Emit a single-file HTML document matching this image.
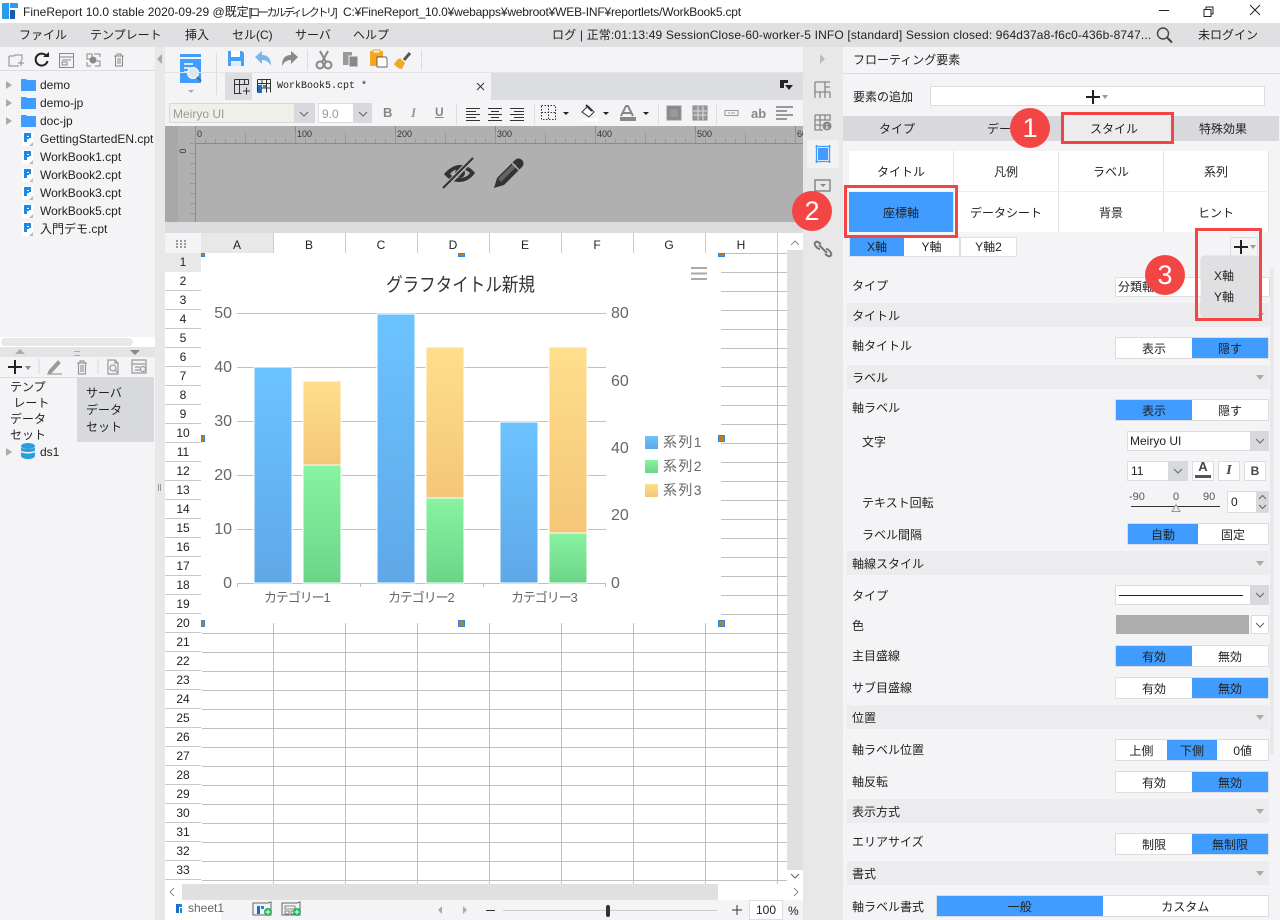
<!DOCTYPE html>
<html lang="ja"><head><meta charset="utf-8"><title>FineReport</title>
<style>
html,body{margin:0;padding:0;width:1280px;height:920px;overflow:hidden;background:#fff}
body{position:relative;font:12px/16px "Liberation Sans","Noto Sans CJK JP",sans-serif;color:#222}
.a{position:absolute;display:block}
.t{position:absolute;white-space:nowrap;line-height:16px}
.l{margin-top:1px}
.c{text-align:center}
.sec{position:absolute;left:847px;width:422px;height:24px;background:#ececee;line-height:26px;text-indent:5px}
.sec:after{content:"";position:absolute;right:5px;top:10px;border:4px solid transparent;border-top:5px solid #aaa;border-bottom:0}
.tg{position:absolute;height:20px;border:1px solid #dcdde0;background:#fff;display:flex;text-align:center;line-height:22px}
.tg span{flex:1;display:block}
.tg .on{background:#409cff}
.red{position:absolute;border:3px solid #f44545;box-sizing:border-box}
.dot{position:absolute;width:40px;height:40px;border-radius:50%;background:#f44545;color:#fff;text-align:center;font-size:27px;line-height:40px}
.h{position:absolute;width:5px;height:5px;border:1px solid #2e86de;background:#c97a10}
.r{height:19px;text-align:center;line-height:18px}
.box{position:absolute;background:#fff;border:1px solid #dcdde0;box-sizing:border-box}
.ar{position:absolute;background:#d8d9dc}
.tree{position:absolute;left:40px;line-height:16px;white-space:nowrap}
svg{overflow:visible}
</style></head><body>
<svg width="0" height="0" style="position:absolute"><defs>
<symbol id="chev" viewBox="0 0 10 6"><path d="M1 1l4 4 4-4" fill="none" stroke="#666" stroke-width="1.1"/></symbol>
<symbol id="doc" viewBox="0 0 12 15"><path d="M0 0h11v10l-4 4H0z" fill="#fff"/><path d="M7 14l4-4v4z" fill="#bbb"/><path d="M2 1h7v5H7V4H5v6H2z" fill="#1e88e5"/><path d="M5 5h2v2H5z" fill="#1e88e5"/></symbol>
<symbol id="fold" viewBox="0 0 15 13"><path d="M0 1h5l1 1h9v11H0z" fill="#409cff"/></symbol>
<symbol id="plus" viewBox="0 0 14 14"><path d="M7 0v14M0 7h14" stroke="#222" stroke-width="2" fill="none"/></symbol>
</defs></svg>

<!-- title bar -->
<svg class="a" style="left:2px;top:3px" width="16" height="16" viewBox="0 0 16 16"><path d="M1 0h6v16H1a1 1 0 0 1-1-1V1a1 1 0 0 1 1-1z" fill="#2a9cf0"/><path d="M8 0h7a1 1 0 0 1 1 1v4H8z" fill="#2a9cf0"/><path d="M8 7h5v9H8z" fill="#1560a8"/></svg>
<div class="t" style="left:23px;top:4px">FineReport 10.0 stable 2020-09-29 @既定<span style="letter-spacing:-2.4px;font-size:11px">[ローカルディレクトリ]</span></div>
<div class="t" style="left:343px;top:4px;letter-spacing:-.19px">C:¥FineReport_10.0¥webapps¥webroot¥WEB-INF¥reportlets/WorkBook5.cpt</div>
<svg class="a" style="left:1155px;top:3px" width="110" height="16" viewBox="0 0 110 16" fill="none" stroke="#222" stroke-width="1"><path d="M4 7.5h10"/><path d="M49 6.5h7v7h-7zM51 6.5V4h7v7h-2"/><path d="M95 2l10 10M105 2L95 12"/></svg>

<!-- menu bar -->
<div class="a" style="left:0;top:23px;width:1280px;height:24px;background:#e0e0e2"></div>
<div class="t" style="left:19px;top:27px">ファイル</div>
<div class="t" style="left:90px;top:27px">テンプレート</div>
<div class="t" style="left:185px;top:27px">挿入</div>
<div class="t" style="left:232px;top:27px">セル(C)</div>
<div class="t" style="left:295px;top:27px">サーバ</div>
<div class="t" style="left:353px;top:27px">ヘルプ</div>
<div class="t" style="left:552px;top:27px;letter-spacing:.16px">ログ | 正常:01:13:49 SessionClose-60-worker-5 INFO [standard] Session closed: 964d37a8-f6c0-436b-8747...</div>
<svg class="a" style="left:1156px;top:27px" width="17" height="17" viewBox="0 0 17 17" fill="none" stroke="#444" stroke-width="1.4"><circle cx="7" cy="6.500" r="5.500"/><path d="M11 10.500l5 5" stroke-width="2"/></svg>
<div class="t" style="left:1198px;top:27px">未ログイン</div>

<!-- left panel -->
<div class="a" style="left:0;top:47px;width:155px;height:873px;background:#f4f4f7"></div>
<div class="a" style="left:0;top:70px;width:155px;height:1px;background:#dcdde0"></div>
<svg class="a" style="left:8px;top:52px" width="120" height="16" viewBox="0 0 120 16" fill="none" stroke="#888" stroke-width="1"><path d="M1 4h5l1-1h7v5M1 4v10h10M10 11h6M13 8v6"/><path d="M51.500 1.500h14v14h-14zM51.500 5h14M54 8h9M54 10h5v3h-5z"/><path d="M79 2h5v5h-5zM86 2h6v3M79 10v4h4M86 9h6v5h-5"/><circle cx="85" cy="8" r="3" fill="#888"/><path d="M106 4h10M109 4V2h4v2M107.500 4v10h7V4M110 6v6M112 6v6"/></svg>
<svg class="a" style="left:34px;top:52px" width="15" height="15" viewBox="0 0 15 15" fill="none"><path d="M12.500 4A6 6 0 1 0 13.500 9" stroke="#222" stroke-width="2"/><path d="M9 5h6V0z" fill="#222"/></svg>

<div class="a" style="left:6px;top:81px;border:4px solid transparent;border-left:6px solid #aaa"></div>
<svg class="a" style="left:21px;top:78px" width="15" height="13"><use href="#fold"/></svg>
<div class="tree" style="top:77px">demo</div>
<div class="a" style="left:6px;top:99px;border:4px solid transparent;border-left:6px solid #aaa"></div>
<svg class="a" style="left:21px;top:96px" width="15" height="13"><use href="#fold"/></svg>
<div class="tree" style="top:95px">demo-jp</div>
<div class="a" style="left:6px;top:117px;border:4px solid transparent;border-left:6px solid #aaa"></div>
<svg class="a" style="left:21px;top:114px" width="15" height="13"><use href="#fold"/></svg>
<div class="tree" style="top:113px">doc-jp</div>
<svg class="a" style="left:22px;top:132px" width="12" height="15"><use href="#doc"/></svg>
<div class="tree" style="top:131px">GettingStartedEN.cpt</div>
<svg class="a" style="left:22px;top:150px" width="12" height="15"><use href="#doc"/></svg>
<div class="tree" style="top:149px">WorkBook1.cpt</div>
<svg class="a" style="left:22px;top:168px" width="12" height="15"><use href="#doc"/></svg>
<div class="tree" style="top:167px">WorkBook2.cpt</div>
<svg class="a" style="left:22px;top:186px" width="12" height="15"><use href="#doc"/></svg>
<div class="tree" style="top:185px">WorkBook3.cpt</div>
<svg class="a" style="left:22px;top:204px" width="12" height="15"><use href="#doc"/></svg>
<div class="tree" style="top:203px">WorkBook5.cpt</div>
<svg class="a" style="left:22px;top:222px" width="12" height="15"><use href="#doc"/></svg>
<div class="tree" style="top:221px">入門デモ.cpt</div>

<div class="a" style="left:0;top:337px;width:155px;height:10px;background:#fff"></div>
<div class="a" style="left:1px;top:338px;width:132px;height:8px;border-radius:4px;background:#e8e8e8"></div>
<div class="a" style="left:0;top:347px;width:155px;height:10px;background:#e4e4e6"></div>
<div class="a" style="left:15px;top:349px;border:5px solid transparent;border-bottom:5px solid #aaa;border-top:0"></div>
<div class="a" style="left:130px;top:350px;border:5px solid transparent;border-top:5px solid #888;border-bottom:0"></div>
<div class="a" style="left:74px;top:351px;width:6px;height:3px;border-top:1px solid #aaa;border-bottom:1px solid #aaa"></div>
<svg class="a" style="left:8px;top:360px" width="14" height="14"><use href="#plus"/></svg>
<div class="a" style="left:25px;top:366px;border:3px solid transparent;border-top:4px solid #888;border-bottom:0"></div>
<svg class="a" style="left:39px;top:358px" width="110" height="18" viewBox="0 0 110 18" fill="none" stroke="#999" stroke-width="1.2"><path d="M0 1v15M59 1v15" stroke="#ddd"/><path d="M10 13L19 3l2 2-9 10-3 1z" fill="#999"/><path d="M9 16h14"/><path d="M38 5h10M41 5V3h4v2M39.500 5v11h7V5M42 7v7M44 7v7"/><path d="M69 2h7l3 3v11H69zM76 2v3h3"/><circle cx="74" cy="10" r="3"/><path d="M76 12l3 3"/><path d="M93 2h14v13H93zM93 6h14M96 9h5M96 12h5"/><circle cx="104" cy="11" r="2.500"/></svg>
<div class="a" style="left:0;top:377px;width:154px;height:1px;background:#dcdde0"></div>
<div class="a" style="left:77px;top:378px;width:77px;height:64px;background:#d8d9dc"></div>
<div class="t" style="left:10px;top:379px;line-height:16px">テンプ<br>&nbsp;レート<br>データ<br>セット</div>
<div class="t" style="left:86px;top:385px;line-height:17px">サーバ<br>データ<br>セット</div>
<div class="a" style="left:6px;top:448px;border:4px solid transparent;border-left:6px solid #aaa"></div>
<svg class="a" style="left:21px;top:443px" width="14" height="16" viewBox="0 0 14 16"><ellipse cx="7" cy="3" rx="7" ry="3" fill="#2a9fe0"/><path d="M0 4.500c2 2 12 2 14 0v3c-2 2-12 2-14 0zM0 9c2 2 12 2 14 0v4c-1 4-13 4-14 0z" fill="#2a9fe0"/></svg>
<div class="tree" style="top:444px">ds1</div>

<!-- splitter -->
<div class="a" style="left:155px;top:47px;width:10px;height:873px;background:#e8e8e8"></div>
<div class="a" style="left:157px;top:54px;border:5px solid transparent;border-right:5px solid #aaa;border-left:0"></div>
<div class="a" style="left:158px;top:484px;width:1px;height:7px;background:#999;box-shadow:2px 0 #999"></div>

<!-- toolbars -->
<div class="a" style="left:165px;top:47px;width:638px;height:79px;background:#f4f4f7"></div>
<svg class="a" style="left:180px;top:54px" width="22" height="42" viewBox="0 0 22 42"><path d="M0 0h21v3H0z" fill="#409cff"/><path d="M0 5h21v24H0z" fill="#409cff"/><path d="M4 10h9M4 14h6M4 18h5" stroke="#fff" stroke-width="1.500"/><circle cx="13" cy="19" r="5.500" fill="#d8e8f8" stroke="#fff"/><path d="M17 23l4 4" stroke="#666" stroke-width="2"/><path d="M8 36h6l-3 3z" fill="#aaa"/></svg>
<div class="a" style="left:216px;top:53px;width:1px;height:42px;background:#ddd"></div>
<svg class="a" style="left:228px;top:50px" width="200" height="22" viewBox="0 0 200 22">
<path d="M0 1h14l2 2v13H0z" fill="#4a9ff0"/><path d="M3 1h9v6H3z" fill="#fff"/><path d="M3 11h10v5H3z" fill="#fff" opacity=".8"/>
<path d="M27 7l7-6v4c7 0 9 5 9 11-2-4-5-6-9-6v4z" fill="#7ab6ec"/>
<path d="M70 7l-7-6v4c-7 0-9 5-9 11 2-4 5-6 9-6v4z" fill="#888"/>
<path d="M79.500 0v20" stroke="#ddd"/>
<circle cx="92" cy="15" r="3.500" fill="none" stroke="#888" stroke-width="2"/><circle cx="100" cy="15" r="3.500" fill="none" stroke="#888" stroke-width="2"/><path d="M94 12L100 1M98 12L92 1" stroke="#888" stroke-width="2"/>
<path d="M115 2h9v13h-9z" fill="#999"/><path d="M121 6h9v11h-9z" fill="#888" stroke="#f4f4f7"/>
<path d="M142 1h13v15h-13z" fill="#f5a623"/><path d="M145 0h7v3h-7z" fill="#f4f4f7" stroke="#f5a623"/><path d="M149 7h9l1 2v8h-10z" fill="#fff" stroke="#333" stroke-width=".7"/>
<path d="M169 10l3-2 5 5-3 6c-3 0-7-3-8-5z" fill="#f5a623"/><path d="M176 10l6-7" stroke="#555" stroke-width="3"/>
<path d="M193.500 0v20" stroke="#ddd"/></svg>
<div class="a" style="left:165px;top:72px;width:638px;height:1px;background:#e4e4e6"></div>
<div class="a" style="left:225px;top:73px;width:578px;height:27px;background:#dcdde0"></div>
<div class="a" style="left:252px;top:73px;width:239px;height:27px;background:#f4f4f7"></div>
<svg class="a" style="left:234px;top:79px" width="16" height="16" viewBox="0 0 16 16" fill="none" stroke="#333"><path d="M.5.500h14M.5 5.500h14M.5.500v14h7M5.500.500v14M10.500.500v5M14.500.500v5M9 12h7M12.500 8.500v7"/></svg>
<svg class="a" style="left:257px;top:79px" width="14" height="14" viewBox="0 0 14 14" fill="none"><path d="M.5.500h13v13M.5.500v13M.5 4.500h13M.5 9h13M5 .5v5M9.500 .5v13" stroke="#333"/><path d="M1 6h4v8H1z" fill="#1c6fc0"/><path d="M6 6h3v3H6z" fill="#1c88e0"/></svg>
<div class="t" style="left:277px;top:79px;font-family:'Liberation Mono','Noto Sans CJK JP',monospace;font-size:10px">WorkBook5.cpt *</div>
<svg class="a" style="left:476px;top:82px" width="9" height="9" viewBox="0 0 9 9" stroke="#333"><path d="M1 1l7 7M8 1L1 8"/></svg>
<svg class="a" style="left:780px;top:80px" width="14" height="11" viewBox="0 0 14 11"><path d="M0 0h8v3H4v5H0z" fill="#222"/><path d="M5 5h8l-4 5z" fill="#222"/></svg>

<!-- format bar -->
<div class="a" style="left:169px;top:103px;width:146px;height:20px;background:#f0f0e8;border:1px solid #d8d9dc;box-sizing:border-box"></div>
<div class="t" style="left:173px;top:106px;color:#999">Meiryo UI</div>
<div class="ar" style="left:294px;top:103px;width:20px;height:20px"></div>
<svg class="a" style="left:299px;top:111px" width="10" height="6"><use href="#chev"/></svg>
<div class="box" style="left:318px;top:103px;width:54px;height:20px"></div>
<div class="t" style="left:322px;top:106px;color:#999">9.0</div>
<div class="ar" style="left:353px;top:103px;width:19px;height:20px"></div>
<svg class="a" style="left:358px;top:111px" width="10" height="6"><use href="#chev"/></svg>
<div class="t" style="left:383px;top:105px;font-weight:bold;color:#888;font-size:13px">B</div>
<div class="t" style="left:411px;top:105px;font-style:italic;font-family:'Liberation Serif',serif;font-weight:bold;color:#999;font-size:13px">I</div>
<div class="t" style="left:435px;top:104px;font-weight:bold;color:#888;font-size:12px;text-decoration:underline">U</div>
<svg class="a" style="left:456px;top:102px" width="340" height="24" viewBox="0 0 340 24" fill="none" stroke="#333">
<path d="M.5 2v20" stroke="#ddd"/>
<path d="M10 6.500h14M10 9.500h10M10 12.500h14M10 15.500h10M10 18.500h14" stroke-width=".9"/>
<path d="M32 6.500h14M35 9.500h8M32 12.500h14M35 15.500h8M32 18.500h14" stroke-width=".9"/>
<path d="M54 6.500h14M58 9.500h10M54 12.500h14M58 15.500h10M54 18.500h14" stroke-width=".9"/>
<path d="M78.500 2v20" stroke="#ddd"/>
<path d="M85.500 3.500h14v14h-14zM92.500 3.500v14M85.500 10.500h14" stroke-dasharray="1.500 1.500"/>
<path d="M107 10h6l-3 3z" fill="#222" stroke="none"/>
<path d="M126 10l6-6 6 6-5 5z" stroke="#333" fill="#fff"/><path d="M130 3l6 6" stroke-width="2"/><path d="M126 16h16v3h-16z" fill="#fff" stroke="none"/>
<path d="M147 10h6l-3 3z" fill="#222" stroke="none"/>
<path d="M165 14l5-10h2l5 10M167 11h8" stroke="#888" stroke-width="2"/><path d="M164 15h16v4h-16z" fill="#888" stroke="none"/>
<path d="M187 10h6l-3 3z" fill="#222" stroke="none"/>
<path d="M202.500 2v20" stroke="#ddd"/>
<path d="M211 4h14v14h-14z" fill="#888" stroke="#999"/><path d="M214 7h8v8h-8z" fill="#999" stroke="none"/>
<path d="M237 4h14v14h-14z" fill="#999" stroke="#888"/><path d="M237 9h14M237 13h14M242 4v14M247 4v14" stroke="#ddd"/>
<path d="M260.500 2v20" stroke="#ddd"/>
<path d="M269 8.500h13v5h-13zM272 11h2M275 11h4" stroke="#999"/>
<path d="M320 5h17M320 9h11M320 13h17M320 17h11" stroke="#999" stroke-width="2"/>
</svg>
<div class="t" style="left:751px;top:106px;font-weight:bold;color:#888;font-size:13px">ab</div>

<!-- ruler -->
<div class="a" style="left:165px;top:126px;width:638px;height:96px;background:#b0b0b0"></div>
<div class="a" style="left:165px;top:126px;width:13px;height:96px;background:#a8a8a8"></div>
<div class="a" style="left:195px;top:139px;width:608px;height:4px;background:repeating-linear-gradient(90deg,#999 0 1px,transparent 1px 10px)"></div>
<div class="a" style="left:195px;top:126px;width:608px;height:17px;background:repeating-linear-gradient(90deg,#8c8c8c 0 1px,transparent 1px 100px)"></div>
<div class="a" style="left:195px;top:133px;width:608px;height:10px;background:repeating-linear-gradient(90deg,#999 0 1px,transparent 1px 50px)"></div>
<div class="a" style="left:195px;top:143px;width:608px;height:1px;background:#8a8a8a"></div>
<div class="a" style="left:195px;top:143px;width:1px;height:79px;background:#8a8a8a"></div>
<div class="a" style="left:190px;top:143px;width:5px;height:79px;background:repeating-linear-gradient(180deg,#999 0 1px,transparent 1px 10px)"></div>
<div class="t" style="left:197px;top:126px;font-size:9px;color:#333">0</div>
<div class="t" style="left:297px;top:126px;font-size:9px;color:#333">100</div>
<div class="t" style="left:397px;top:126px;font-size:9px;color:#333">200</div>
<div class="t" style="left:497px;top:126px;font-size:9px;color:#333">300</div>
<div class="t" style="left:597px;top:126px;font-size:9px;color:#333">400</div>
<div class="t" style="left:697px;top:126px;font-size:9px;color:#333">500</div>
<div class="t" style="left:797px;top:126px;font-size:9px;color:#333;width:6px;overflow:hidden">600</div>
<div class="t" style="left:180px;top:143px;font-size:9px;color:#333;transform:rotate(90deg)">0</div>
<svg class="a" style="left:443px;top:157px" width="83" height="32" viewBox="0 0 83 32" fill="none"><path d="M1 17C7 10 13 8 17 8c7 0 12 4 15 8-5 7-11 9-16 9-6 0-11-3-15-8z" fill="#333"/><path d="M7 17c3-4 7-5 10-5 4 0 8 2 10 4-3 4-7 5-10 5-4 0-7-1-10-4z" fill="#b0b0b0"/><circle cx="17" cy="16" r="5" fill="#333"/><path d="M1 31L30 1" stroke="#b0b0b0" stroke-width="5"/><path d="M0 31L30 1" stroke="#333" stroke-width="2"/><path d="M51 31l3-10 18-18c2-2 5-2 7 0s2 5 0 7L61 28z" fill="#333"/><path d="M69 6l7 7" stroke="#b0b0b0" stroke-width="1.500"/><path d="M55 22l16-16 3 3-16 16z" fill="#b0b0b0" opacity=".4"/></svg>

<!-- sheet -->
<div class="a" style="left:165px;top:222px;width:638px;height:11px;background:#dcdcde"></div>
<div class="a" style="left:165px;top:233px;width:622px;height:20px;background:#fff"></div>
<div class="a" style="left:165px;top:233px;width:36px;height:20px;background:#f4f4f7"></div>
<svg class="a" style="left:176px;top:240px" width="12" height="10" viewBox="0 0 12 10"><path d="M0 0h2v2H0zM4 0h2v2H4zM8 0h2v2H8zM0 3h2v2H0zM4 3h2v2H4zM8 3h2v2H8zM0 6h2v2H0zM4 6h2v2H4zM8 6h2v2H8z" fill="#999"/></svg>
<div class="a" style="left:201px;top:233px;width:72px;height:20px;background:#e8e8e8"></div>
<div class="a" style="left:273px;top:233px;width:514px;height:20px;background:repeating-linear-gradient(90deg,#ccc 0 1px,transparent 1px 72px)"></div>
<div class="t c" style="left:201px;top:237px;width:72px">A</div>
<div class="t c" style="left:273px;top:237px;width:72px">B</div>
<div class="t c" style="left:345px;top:237px;width:72px">C</div>
<div class="t c" style="left:417px;top:237px;width:72px">D</div>
<div class="t c" style="left:489px;top:237px;width:72px">E</div>
<div class="t c" style="left:561px;top:237px;width:72px">F</div>
<div class="t c" style="left:633px;top:237px;width:72px">G</div>
<div class="t c" style="left:705px;top:237px;width:72px">H</div>

<div class="a" style="left:165px;top:253px;width:36px;height:631px;overflow:hidden;background:#fff repeating-linear-gradient(180deg,transparent 0 18px,#c8c8c8 18px 19px)">
<div class="r" style="background:#e8e8e8">1</div><div class="r">2</div><div class="r">3</div><div class="r">4</div><div class="r">5</div><div class="r">6</div><div class="r">7</div><div class="r">8</div><div class="r">9</div><div class="r">10</div><div class="r">11</div><div class="r">12</div><div class="r">13</div><div class="r">14</div><div class="r">15</div><div class="r">16</div><div class="r">17</div><div class="r">18</div><div class="r">19</div><div class="r">20</div><div class="r">21</div><div class="r">22</div><div class="r">23</div><div class="r">24</div><div class="r">25</div><div class="r">26</div><div class="r">27</div><div class="r">28</div><div class="r">29</div><div class="r">30</div><div class="r">31</div><div class="r">32</div><div class="r">33</div></div>
<div class="a" style="left:202px;top:253px;width:585px;height:631px;background:repeating-linear-gradient(180deg,#c0c0c0 0 1px,transparent 1px 19px),repeating-linear-gradient(90deg,transparent 0 71px,#c0c0c0 71px 72px)"></div>
<div class="a" style="left:201px;top:253px;width:520px;height:370px;background:#fff"></div>

<!-- chart -->
<svg class="a" style="left:201px;top:253px" width="520" height="370" viewBox="201 253 520 370" font-family="'Liberation Sans','Noto Sans CJK JP',sans-serif">
<defs>
<linearGradient id="gb" x1="0" y1="0" x2="0" y2="1"><stop offset="0" stop-color="#6cc3ff"/><stop offset="1" stop-color="#5fa8e8"/></linearGradient>
<linearGradient id="gg" x1="0" y1="0" x2="0" y2="1"><stop offset="0" stop-color="#88f3a0"/><stop offset="1" stop-color="#6cd48a"/></linearGradient>
<linearGradient id="go" x1="0" y1="0" x2="0" y2="1"><stop offset="0" stop-color="#fede8c"/><stop offset="1" stop-color="#f5c678"/></linearGradient>
</defs>
<path d="M237 313.500H606M237 367.500H606M237 421.500H606M237 475.500H606M237 529.500H606" stroke="#c0c0c0"/>
<path d="M237 583.500H605.500V587M360.500 583V587M483.500 583V587M237.500 583V587" stroke="#c0c0c0" fill="none"/>
<g stroke="#fff" stroke-width="1">
<rect x="254" y="367" width="38" height="216" fill="url(#gb)"/>
<rect x="303" y="381" width="38" height="84" fill="url(#go)"/>
<rect x="303" y="465" width="38" height="118" fill="url(#gg)"/>
<rect x="377" y="314" width="38" height="269" fill="url(#gb)"/>
<rect x="426" y="347" width="38" height="151" fill="url(#go)"/>
<rect x="426" y="498" width="38" height="85" fill="url(#gg)"/>
<rect x="500" y="422" width="38" height="161" fill="url(#gb)"/>
<rect x="549" y="347" width="38" height="186" fill="url(#go)"/>
<rect x="549" y="533" width="38" height="50" fill="url(#gg)"/>
</g>
<text x="386" y="291" font-size="19" fill="#333" textLength="149" lengthAdjust="spacingAndGlyphs">グラフタイトル新規</text>
<path d="M691 268h16M691 273.500h16M691 279h16" stroke="#aaa" stroke-width="2"/>
<g font-size="16" fill="#666">
<text x="232" y="318" text-anchor="end">50</text><text x="232" y="372" text-anchor="end">40</text><text x="232" y="426" text-anchor="end">30</text><text x="232" y="480" text-anchor="end">20</text><text x="232" y="534" text-anchor="end">10</text><text x="232" y="588" text-anchor="end">0</text>
<text x="611" y="318">80</text><text x="611" y="386">60</text><text x="611" y="453">40</text><text x="611" y="520">20</text><text x="611" y="588">0</text>
</g>
<g font-size="13" fill="#666" letter-spacing="-1.1">
<text x="264" y="602">カテゴリー1</text>
<text x="388" y="602">カテゴリー2</text>
<text x="511" y="602">カテゴリー3</text>
</g>
<rect x="645" y="436" width="13" height="13" fill="url(#gb)"/><rect x="645" y="460" width="13" height="13" fill="url(#gg)"/><rect x="645" y="484" width="13" height="13" fill="url(#go)"/>
<g font-size="14" fill="#666" letter-spacing="1.400"><text x="663" y="447">系列1</text><text x="663" y="471">系列2</text><text x="663" y="495">系列3</text></g>
</svg>
<div class="h" style="left:201px;top:253px;width:2px;height:2px"></div><div class="h" style="left:458px;top:253px;height:2px"></div><div class="h" style="left:718px;top:253px;height:2px"></div>
<div class="h" style="left:201px;top:435px;width:2px"></div><div class="h" style="left:718px;top:435px"></div>
<div class="h" style="left:201px;top:620px;width:2px"></div><div class="h" style="left:458px;top:620px"></div><div class="h" style="left:718px;top:620px"></div>

<!-- scrollbars -->
<div class="a" style="left:787px;top:233px;width:16px;height:651px;background:#fff"></div>
<div class="a" style="left:787px;top:250px;width:16px;height:620px;background:#e0e0e0"></div>
<svg class="a" style="left:790px;top:240px" width="10" height="6"><path d="M1 5l4-4 4 4" fill="none" stroke="#888"/></svg>
<svg class="a" style="left:790px;top:873px" width="10" height="6"><use href="#chev"/></svg>
<div class="a" style="left:165px;top:884px;width:638px;height:16px;background:#fff"></div>
<div class="a" style="left:182px;top:884px;width:536px;height:16px;background:#e0e0e0"></div>
<svg class="a" style="left:169px;top:887px" width="6" height="10"><path d="M5 1L1 5l4 4" fill="none" stroke="#888"/></svg>
<svg class="a" style="left:793px;top:887px" width="6" height="10"><path d="M1 1l4 4-4 4" fill="none" stroke="#888"/></svg>
<div class="a" style="left:165px;top:900px;width:638px;height:20px;background:#f4f4f7"></div>
<div class="a" style="left:165px;top:900px;width:56px;height:20px;background:#fff"></div>
<svg class="a" style="left:176px;top:904px" width="7" height="9" viewBox="0 0 7 9"><path d="M0 0h3v9H0z" fill="#1c6fc0"/><path d="M3 0h3v3H3z" fill="#1c88e0"/><path d="M4 4h2v5H4z" fill="#1c88e0"/></svg>
<div class="t" style="left:188px;top:900px;color:#666">sheet1</div>
<svg class="a" style="left:250px;top:900px" width="62" height="18" viewBox="0 0 62 18" fill="none"><path d="M3 3h15l3-1v13H3z" stroke="#666"/><path d="M7 6h3v8H7z" fill="#1c6fc0"/><path d="M11 6h3v3h-3z" fill="#1c88e0"/><circle cx="18" cy="12" r="4" fill="#1eb45a"/><path d="M15.500 12h5M18 9.500v5" stroke="#fff"/><path d="M32 3h15l3-1v13H32z" stroke="#666"/><path d="M35 6h10v3H35zM35 11h4v3h-4zM41 11h4v3h-4z" stroke="#666" stroke-width=".8"/><circle cx="47" cy="12" r="4" fill="#1eb45a"/><path d="M44.500 12h5M47 9.500v5" stroke="#fff"/></svg>
<div class="a" style="left:438px;top:906px;border:4px solid transparent;border-right:4px solid #aaa;border-left:0"></div>
<div class="a" style="left:463px;top:906px;border:4px solid transparent;border-left:4px solid #aaa;border-right:0"></div>
<div class="a" style="left:486px;top:910px;width:9px;height:1px;background:#333"></div>
<div class="a" style="left:503px;top:910px;width:214px;height:1px;background:#ccc"></div>
<div class="a" style="left:606px;top:905px;width:4px;height:12px;border-radius:2px;background:#333"></div>
<svg class="a" style="left:732px;top:905px" width="10" height="10"><path d="M0 5h10M5 0v10" stroke="#333"/></svg>
<div class="box" style="left:749px;top:900px;width:34px;height:20px;background:#fff"></div>
<div class="t c" style="left:749px;top:902px;width:34px">100</div>
<div class="t" style="left:788px;top:903px">%</div>

<!-- icon strip -->
<div class="a" style="left:803px;top:47px;width:40px;height:873px;background:#e8e8e8"></div>
<div class="a" style="left:820px;top:54px;border:5px solid transparent;border-left:5px solid #bbb;border-right:0"></div>
<div class="a" style="left:807px;top:140px;width:32px;height:28px;background:#f2f2f4"></div>
<svg class="a" style="left:814px;top:81px" width="18" height="120" viewBox="0 0 18 120" fill="none" stroke="#888" stroke-width="1.300">
<path d="M1 1h15M1 1v16M1 11h15M11 1v16M6 11v6M16 6H11M16 11v6"/>
<path d="M1 34h15v6M1 34v15h8M1 39h15M1 44h7M6 34v15M11 34v5"/><circle cx="13" cy="45" r="4.500" fill="#888" stroke="none"/><path d="M13 43v1M13 45v3" stroke="#fff"/>
<path d="M4 67h10v12H4z" fill="#409cff" stroke="none"/><path d="M1.500 65.500h15M1.500 80.500h15M2.500 64v18M15.500 64v18" stroke="#409cff"/>
<path d="M1 99h15v11H1z" stroke-width="1.500"/><path d="M6 103h6l-3 3z" fill="#888" stroke="none"/>
</svg>
<svg class="a" style="left:814px;top:240px" width="18" height="18" viewBox="0 0 18 18" fill="none" stroke="#777" stroke-width="2"><path d="M7 4L4 2C2 1 0 3 1 5s3 4 5 4M11 14l3 2c2 1 4-1 3-3s-3-4-5-4"/><path d="M5 5l8 8"/></svg>

<!-- right panel -->
<div class="a" style="left:843px;top:47px;width:437px;height:873px;background:#f4f4f7"></div>
<div class="t" style="left:853px;top:52px">フローティング要素</div>
<div class="a" style="left:843px;top:73px;width:437px;height:1px;background:#dcdde0"></div>
<div class="t" style="left:853px;top:89px">要素の追加</div>
<div class="box" style="left:930px;top:86px;width:335px;height:20px"></div>
<svg class="a" style="left:1086px;top:90px" width="14" height="14"><use href="#plus"/></svg>
<div class="a" style="left:1102px;top:95px;border:3px solid transparent;border-top:4px solid #999;border-bottom:0"></div>
<div class="a" style="left:843px;top:116px;width:436px;height:25px;background:#d8d9dc"></div>
<div class="a" style="left:1064px;top:115px;width:107px;height:26px;background:#ececee"></div>
<div class="t c" style="left:847px;top:121px;width:100px">タイプ</div>
<div class="t" style="left:987px;top:121px">データ</div>
<div class="t c" style="left:1064px;top:121px;width:100px">スタイル</div>
<div class="t c" style="left:1173px;top:121px;width:100px">特殊効果</div>
<div class="a" style="left:849px;top:151px;width:420px;height:81px;background:repeating-linear-gradient(90deg,#fff 0 104px,#e4e4e6 104px 105px)"></div>
<div class="a" style="left:849px;top:191px;width:420px;height:1px;background:#eee"></div>
<div class="t c" style="left:849px;top:164px;width:104px">タイトル</div>
<div class="t c" style="left:954px;top:164px;width:104px">凡例</div>
<div class="t c" style="left:1059px;top:164px;width:104px">ラベル</div>
<div class="t c" style="left:1164px;top:164px;width:104px">系列</div>
<div class="a" style="left:849px;top:192px;width:104px;height:40px;background:#409cff"></div>
<div class="t c" style="left:849px;top:205px;width:104px">座標軸</div>
<div class="t c" style="left:954px;top:205px;width:104px">データシート</div>
<div class="t c" style="left:1059px;top:205px;width:104px">背景</div>
<div class="t c" style="left:1164px;top:205px;width:104px">ヒント</div>
<div class="tg" style="left:849px;top:237px;width:166px;height:18px;line-height:18px;border-color:#e0e0e2"><span class="on" style="flex:none;width:54px">X軸</span><span style="flex:none;width:55px;border-right:2px solid #e0e0e2">Y軸</span><span style="flex:none;width:55px">Y軸2</span></div>

<div class="t l" style="left:852px;top:277px">タイプ</div>
<div class="box" style="left:1115px;top:277px;width:155px;height:20px"></div>
<div class="t" style="left:1118px;top:279px">分類軸</div>
<div class="sec" style="top:303px">タイトル</div>
<div class="t l" style="left:852px;top:337px">軸タイトル</div>
<div class="tg" style="left:1115px;top:337px;width:152px"><span>表示</span><span class="on">隠す</span></div>
<div class="sec" style="top:365px">ラベル</div>
<div class="t l" style="left:852px;top:399px">軸ラベル</div>
<div class="tg" style="left:1115px;top:399px;width:152px"><span class="on">表示</span><span>隠す</span></div>
<div class="t l" style="left:862px;top:433px">文字</div>
<div class="box" style="left:1127px;top:431px;width:142px;height:20px"></div>
<div class="t" style="left:1130px;top:433px">Meiryo UI</div>
<div class="ar" style="left:1250px;top:431px;width:19px;height:20px"></div>
<svg class="a" style="left:1255px;top:438px" width="10" height="6"><use href="#chev"/></svg>
<div class="box" style="left:1127px;top:461px;width:61px;height:20px"></div>
<div class="t" style="left:1131px;top:463px">11</div>
<div class="ar" style="left:1168px;top:461px;width:20px;height:20px"></div>
<svg class="a" style="left:1173px;top:468px" width="10" height="6"><use href="#chev"/></svg>
<div class="box" style="left:1192px;top:461px;width:22px;height:20px"></div>
<div class="t c" style="left:1192px;top:459px;width:22px;font-weight:bold;color:#444;font-size:13px">A</div>
<div class="a" style="left:1195px;top:475px;width:16px;height:3px;background:#555"></div>
<div class="box" style="left:1218px;top:461px;width:22px;height:20px"></div>
<div class="t c" style="left:1218px;top:463px;width:22px;font-weight:bold;font-style:italic;font-family:'Liberation Serif',serif;color:#444;font-size:14px">I</div>
<div class="box" style="left:1244px;top:461px;width:22px;height:20px"></div>
<div class="t c" style="left:1244px;top:463px;width:22px;font-weight:bold;color:#444">B</div>
<div class="t l" style="left:862px;top:494px">テキスト回転</div>
<div class="t" style="left:1129px;top:489px;font-size:11px;color:#555">-90</div>
<div class="t" style="left:1173px;top:489px;font-size:11px;color:#555">0</div>
<div class="t" style="left:1203px;top:489px;font-size:11px;color:#555">90</div>
<div class="a" style="left:1131px;top:506px;width:89px;height:1px;background:#333"></div>
<svg class="a" style="left:1171px;top:504px" width="10" height="8"><path d="M5 .5l4 7H1z" fill="#eee" stroke="#999"/></svg>
<div class="box" style="left:1227px;top:491px;width:42px;height:22px"></div>
<div class="t" style="left:1231px;top:494px">0</div>
<div class="ar" style="left:1256px;top:492px;width:13px;height:20px"></div>
<svg class="a" style="left:1258px;top:494px" width="9" height="16" viewBox="0 0 9 16" fill="none" stroke="#666"><path d="M1 5l3.500-3.500L8 5M1 11l3.500 3.500L8 11"/></svg>
<div class="t l" style="left:862px;top:526px">ラベル間隔</div>
<div class="tg" style="left:1127px;top:523px;width:140px"><span class="on">自動</span><span>固定</span></div>
<div class="sec" style="top:551px">軸線スタイル</div>
<div class="t l" style="left:852px;top:587px">タイプ</div>
<div class="box" style="left:1115px;top:585px;width:154px;height:20px"></div>
<div class="a" style="left:1119px;top:595px;width:124px;height:1px;background:#222"></div>
<div class="ar" style="left:1250px;top:585px;width:19px;height:20px"></div>
<svg class="a" style="left:1255px;top:592px" width="10" height="6"><use href="#chev"/></svg>
<div class="t l" style="left:852px;top:617px">色</div>
<div class="a" style="left:1116px;top:615px;width:133px;height:19px;background:#adadad"></div>
<div class="box" style="left:1251px;top:615px;width:18px;height:19px"></div>
<svg class="a" style="left:1255px;top:622px" width="10" height="6"><use href="#chev"/></svg>
<div class="t l" style="left:852px;top:647px">主目盛線</div>
<div class="tg" style="left:1115px;top:645px;width:152px"><span class="on">有効</span><span>無効</span></div>
<div class="t l" style="left:852px;top:679px">サブ目盛線</div>
<div class="tg" style="left:1115px;top:677px;width:152px"><span>有効</span><span class="on">無効</span></div>
<div class="sec" style="top:705px">位置</div>
<div class="t l" style="left:852px;top:741px">軸ラベル位置</div>
<div class="tg" style="left:1115px;top:739px;width:152px"><span>上側</span><span class="on">下側</span><span>0値</span></div>
<div class="t l" style="left:852px;top:773px">軸反転</div>
<div class="tg" style="left:1115px;top:771px;width:152px"><span>有効</span><span class="on">無効</span></div>
<div class="sec" style="top:799px">表示方式</div>
<div class="t l" style="left:852px;top:833px">エリアサイズ</div>
<div class="tg" style="left:1115px;top:833px;width:152px"><span>制限</span><span class="on">無制限</span></div>
<div class="sec" style="top:861px">書式</div>
<div class="t l" style="left:852px;top:898px">軸ラベル書式</div>
<div class="tg" style="left:936px;top:895px;width:331px"><span class="on">一般</span><span>カスタム</span></div>
<div class="a" style="left:1270px;top:268px;width:4px;height:487px;background:#e8e8ea;border-radius:2px"></div>

<!-- plus popup -->
<div class="box" style="left:1230px;top:237px;width:28px;height:20px;background:#f4f4f7"></div>
<svg class="a" style="left:1234px;top:240px" width="14" height="14"><use href="#plus"/></svg>
<div class="a" style="left:1250px;top:245px;border:3px solid transparent;border-top:4px solid #999;border-bottom:0"></div>
<div class="a" style="left:1201px;top:256px;width:58px;height:61px;background:#e0e0e2;border-radius:4px;box-shadow:0 0 1px #aaa"></div>
<div class="t" style="left:1214px;top:268px">X軸</div>
<div class="t" style="left:1214px;top:289px">Y軸</div>

<!-- annotations -->
<div class="red" style="left:1061px;top:112px;width:113px;height:32px"></div>
<div class="red" style="left:844px;top:185px;width:114px;height:53px"></div>
<div class="red" style="left:1195px;top:228px;width:67px;height:93px"></div>
<div class="dot" style="left:1010px;top:108px">1</div>
<div class="dot" style="left:792px;top:191px">2</div>
<div class="dot" style="left:1145px;top:255px">3</div>
</body></html>
